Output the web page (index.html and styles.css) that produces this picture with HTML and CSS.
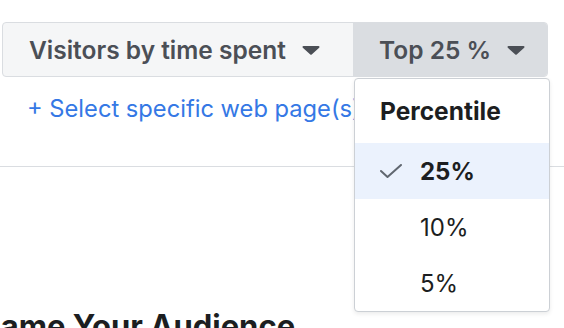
FILE: index.html
```html
<!DOCTYPE html>
<html lang="en">
<head>
    <meta charset="UTF-8">
    <title>Audience filter</title>
    <link rel="stylesheet" href="styles.css">
</head>
<body>
    <div class="toolbar">
        <button class="seg seg-type">
            Visitors by time spent
            <svg class="caret" width="18" height="10" viewBox="0 0 18 10"><path d="M1.5 1h15a1 1 0 0 1 .7 1.7l-7.5 6.8a1 1 0 0 1-1.4 0L.8 2.7A1 1 0 0 1 1.5 1z" fill="#4b4f56"/></svg>
        </button>
        <div class="seg-wrap">
            <button class="seg seg-top">
                Top 25 %
                <svg class="caret" width="18" height="10" viewBox="0 0 18 10"><path d="M1.5 1h15a1 1 0 0 1 .7 1.7l-7.5 6.8a1 1 0 0 1-1.4 0L.8 2.7A1 1 0 0 1 1.5 1z" fill="#4b4f56"/></svg>
            </button>
            <div class="menu">
                <div class="menu-head">Percentile</div>
                <div class="menu-item selected">
                    <span class="tick">
                        <svg width="22" height="14" viewBox="0 0 22 14"><path d="M1 7l6.5 6L21 1" fill="none" stroke="#606770" stroke-width="2" stroke-linecap="round" stroke-linejoin="round"/></svg>
                    </span>
                    25%
                </div>
                <div class="menu-item"><span class="tick"></span>10%</div>
                <div class="menu-item"><span class="tick"></span>5%</div>
            </div>
        </div>
    </div>

    <a class="add-link" href="#">+ Select specific web page(s)</a>

    <div class="divider"></div>

    <h2 class="section-title">Name Your Audience</h2>
</body>
</html>
```

FILE: styles.css
```css
body {
    margin: 0;
    font-family: Inter, "Noto Sans", Arial, sans-serif;
    background: #fff;
    color: #1c1e21;
    overflow: hidden;
}

.toolbar {
    display: flex;
    width: 544px;
    height: 53px;
    margin: 22px 0 0 2px;
    border: 1px solid #dadde1;
    border-radius: 4px;
    background: #f5f6f7;
}

.seg {
    display: flex;
    align-items: center;
    height: 100%;
    border: none;
    padding: 0 0 0 26px;
    font-family: inherit;
    font-size: 24.5px;
    font-weight: 600;
    color: #4b4f56;
    background: transparent;
    white-space: nowrap;
    cursor: pointer;
}

.seg .caret {
    margin-left: 16px;
}

.seg-type {
    width: 350px;
}

.seg-wrap {
    position: relative;
    flex: 1;
}

.seg-top {
    width: 100%;
    background: #dadde1;
    border-radius: 0 3px 3px 0;
}

.menu {
    position: absolute;
    top: calc(100% + 2px);
    left: 1px;
    width: 194px;
    border: 1px solid #ccd0d5;
    border-radius: 4px;
    background: #fff;
    box-shadow: 0 2px 4px rgba(0, 0, 0, 0.08);
    z-index: 2;
}

.menu-head {
    display: flex;
    align-items: center;
    height: 64px;
    padding-left: 25px;
    font-size: 24.5px;
    font-weight: 700;
}

.menu-item {
    display: flex;
    align-items: center;
    height: 56px;
    padding-left: 25px;
    font-size: 24px;
}

.menu-item.selected {
    background: #ebf2fd;
    font-weight: 700;
}

.tick {
    display: flex;
    width: 40px;
}

.add-link {
    display: block;
    width: max-content;
    margin: 17px 0 0 27px;
    font-size: 23.7px;
    color: #3578e5;
    text-decoration: none;
    white-space: nowrap;
}

.divider {
    height: 1px;
    margin-top: 43px;
    background: #dadde1;
}

.section-title {
    margin: 142px 0 0;
    text-indent: -23px;
    font-size: 31px;
    font-weight: 700;
    line-height: 34px;
    white-space: nowrap;
}
```
